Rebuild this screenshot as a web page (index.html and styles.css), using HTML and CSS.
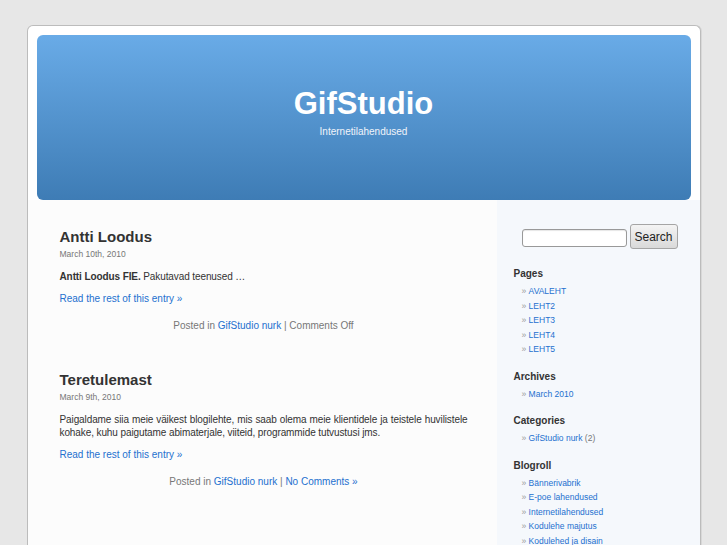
FILE: index.html
```html
<!DOCTYPE html>
<html lang="et">
<head>
    <meta charset="UTF-8">
    <title>GifStudio</title>
    <link rel="stylesheet" href="styles.css">
</head>
<body>
    <div class="page">
        <div class="header">
            <h1>GifStudio</h1>
            <div class="description">Internetilahendused</div>
        </div>

        <div class="main">
            <div class="content">
                <div class="post">
                    <h2><a href="#">Antti Loodus</a></h2>
                    <div class="date">March 10th, 2010</div>
                    <p><strong>Antti Loodus FIE.</strong> Pakutavad teenused …</p>
                    <a class="more" href="#">Read the rest of this entry »</a>
                    <div class="postmeta">Posted in <a href="#">GifStudio nurk</a> | Comments Off</div>
                </div>

                <div class="post">
                    <h2><a href="#">Teretulemast</a></h2>
                    <div class="date">March 9th, 2010</div>
                    <p>Paigaldame siia meie väikest blogilehte, mis saab olema meie klientidele ja teistele huvilistele kohake, kuhu paigutame abimaterjale, viiteid, programmide tutvustusi jms.</p>
                    <a class="more" href="#">Read the rest of this entry »</a>
                    <div class="postmeta">Posted in <a href="#">GifStudio nurk</a> | <a href="#">No Comments »</a></div>
                </div>
            </div>

            <div class="sidebar">
                <form class="searchform">
                    <input type="text" class="search-input">
                    <button type="button" class="search-button">Search</button>
                </form>

                <h3>Pages</h3>
                <ul>
                    <li><a href="#">AVALEHT</a></li>
                    <li><a href="#">LEHT2</a></li>
                    <li><a href="#">LEHT3</a></li>
                    <li><a href="#">LEHT4</a></li>
                    <li><a href="#">LEHT5</a></li>
                </ul>

                <h3>Archives</h3>
                <ul>
                    <li><a href="#">March 2010</a></li>
                </ul>

                <h3>Categories</h3>
                <ul>
                    <li><a href="#">GifStudio nurk</a> <span class="count">(2)</span></li>
                </ul>

                <h3>Blogroll</h3>
                <ul>
                    <li><a href="#">Bännerivabrik</a></li>
                    <li><a href="#">E-poe lahendused</a></li>
                    <li><a href="#">Internetilahendused</a></li>
                    <li><a href="#">Kodulehe majutus</a></li>
                    <li><a href="#">Kodulehed ja disain</a></li>
                </ul>
            </div>
        </div>
    </div>
</body>
</html>
```

FILE: styles.css
```css
body {
    margin: 0;
    background: #e7e7e7;
    font-family: "Liberation Sans", Arial, sans-serif;
    font-size: 10px;
    color: #333;
}

a {
    color: #2470cf;
    text-decoration: none;
}

.page {
    width: 672px;
    margin: 25px auto 0;
    padding-top: 9px;
    background: #fff;
    border: 1px solid #bcbcbc;
    border-bottom: none;
    border-radius: 6px 6px 0 0;
    box-shadow: 1px 0 0 #d8d8d8;
}

.header {
    height: 165px;
    margin: 0 9px;
    border-radius: 6px;
    background: linear-gradient(#69abe7, #3e7cb5);
    color: #fff;
    text-align: center;
}

.header h1 {
    margin: 0;
    padding-top: 51px;
    font-size: 31px;
    line-height: 36px;
    font-weight: bold;
}

.description {
    margin-top: 4px;
    font-size: 10px;
    line-height: 12px;
    color: #f0f4fa;
}

.main {
    display: flex;
}

.content {
    width: 408px;
    padding: 28px 29px 40px 32px;
    background: #fcfcfc;
}

.post {
    margin-bottom: 39px;
}

.post h2 {
    margin: 0;
    font-size: 15px;
    line-height: 18px;
    font-weight: bold;
}

.post h2 a {
    color: #333;
}

.date {
    margin-top: 2px;
    font-size: 8.5px;
    line-height: 12px;
    color: #777;
}

.post p {
    margin: 10px 0 0;
    line-height: 13px;
    letter-spacing: -0.1px;
    text-align: justify;
}

.more {
    display: block;
    margin-top: 9px;
    line-height: 13px;
}

.postmeta {
    margin-top: 14px;
    line-height: 13px;
    color: #777;
    text-align: center;
}

.sidebar {
    flex: 1;
    padding: 24px 10px 20px 17px;
    background: #f5f8fc;
}

.searchform {
    display: flex;
    align-items: flex-end;
    gap: 3px;
    margin: 0 0 18px 8px;
}

.search-input {
    width: 101px;
    height: 14px;
    margin: 0 0 2px;
    padding: 1px;
    border: 1px solid #999;
    border-radius: 3px;
    background: #fff;
    box-shadow: inset 0 1px 1px rgba(0, 0, 0, 0.1);
}

.search-button {
    width: 48px;
    height: 25px;
    padding: 0;
    border: 1px solid #a5a5a5;
    border-radius: 3px;
    background: linear-gradient(#f4f4f4, #d9d9d9);
    font-family: "Liberation Sans", Arial, sans-serif;
    font-size: 12px;
    color: #222;
}

.sidebar h3 {
    margin: 0;
    font-size: 10px;
    line-height: 13px;
    font-weight: bold;
    color: #333;
}

.sidebar ul {
    list-style: none;
    margin: 4px 0 13px;
    padding: 0 0 0 8px;
}

.sidebar li {
    font-size: 8.5px;
    line-height: 14.5px;
}

.sidebar li:before {
    content: "\00BB\00a0";
    color: #999;
}

.count {
    color: #777;
}
```
